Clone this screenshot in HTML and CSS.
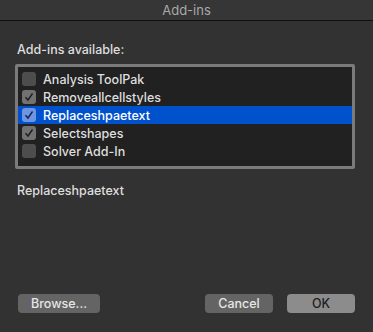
FILE: index.html
```html
<!DOCTYPE html>
<html lang="en">
<head>
    <meta charset="UTF-8">
    <title>Add-ins</title>
    <link rel="stylesheet" href="styles.css">
</head>
<body>
    <div class="window">
        <div class="titlebar">Add-ins</div>
        <div class="content">
            <div class="label">Add-ins available:</div>
            <div class="listbox">
                <div class="row"><span class="check"></span>Analysis ToolPak</div>
                <div class="row"><span class="check on"><svg viewBox="0 0 14 14"><path d="M3.5 7.2 L6 10 L10.5 3.5"/></svg></span>Removeallcellstyles</div>
                <div class="row selected"><span class="check on"><svg viewBox="0 0 14 14"><path d="M3.5 7.2 L6 10 L10.5 3.5"/></svg></span>Replaceshpaetext</div>
                <div class="row"><span class="check on"><svg viewBox="0 0 14 14"><path d="M3.5 7.2 L6 10 L10.5 3.5"/></svg></span>Selectshapes</div>
                <div class="row"><span class="check"></span>Solver Add-In</div>
            </div>
            <div class="desc">Replaceshpaetext</div>
            <div class="buttons">
                <button class="btn">Browse...</button>
                <div class="spacer"></div>
                <button class="btn">Cancel</button>
                <button class="btn ok">OK</button>
            </div>
        </div>
    </div>
</body>
</html>
```

FILE: styles.css
```css
body {
    margin: 0;
    background-color: #323232;
    font-family: Inter, "Liberation Sans", sans-serif;
    font-size: 12.5px;
    font-weight: 500;
    color: #dedede;
}
.window {
    width: 373px;
    height: 332px;
    display: flex;
    flex-direction: column;
}
.titlebar {
    height: 20px;
    line-height: 20px;
    text-align: center;
    background-color: #363636;
    border-bottom: 1px solid #0e0e0e;
    color: #a8a8a8;
    font-size: 13px;
    font-weight: 400;
}
.content {
    flex: 1;
    display: flex;
    flex-direction: column;
    padding: 21px 18px 0 17px;
}
.label {
    height: 16px;
    line-height: 16px;
    margin-bottom: 6px;
}
.listbox {
    width: 334px;
    height: 96px;
    border: 3px solid #7b7b7b;
    border-radius: 2px;
    background-color: #212121;
    padding-top: 3px;
    margin-left: -2px;
}
.row {
    height: 18px;
    display: flex;
    align-items: center;
    padding-left: 4px;
}
.row.selected {
    background-color: #0052cc;
    color: #ffffff;
}
.check {
    width: 14px;
    height: 14px;
    border-radius: 3px;
    background-color: #4d4d4d;
    margin-right: 7px;
    display: flex;
}
.check svg {
    width: 14px;
    height: 14px;
    fill: none;
    stroke: #1e1e1e;
    stroke-width: 1.4;
}
.check.on {
    background-color: #727272;
}
.selected .check.on {
    background-color: #6f95e0;
}
.selected .check svg {
    stroke: #10245a;
}
.desc {
    margin-top: 14px;
    height: 16px;
    line-height: 16px;
}
.buttons {
    margin-top: auto;
    margin-bottom: 19px;
    display: flex;
    gap: 14px;
    margin-left: 1px;
}
.spacer {
    flex: 1;
}
.btn {
    height: 19px;
    width: 68px;
    border: none;
    border-radius: 4px;
    background-color: #646464;
    color: #e6e6e6;
    font-family: Inter, "Liberation Sans", sans-serif;
    font-size: 12.5px;
    font-weight: 500;
    padding: 0;
}
.btn:first-child {
    width: 82px;
}
.btn.ok {
    background-color: #8c8c8c;
    color: #1e1e1e;
}
```
